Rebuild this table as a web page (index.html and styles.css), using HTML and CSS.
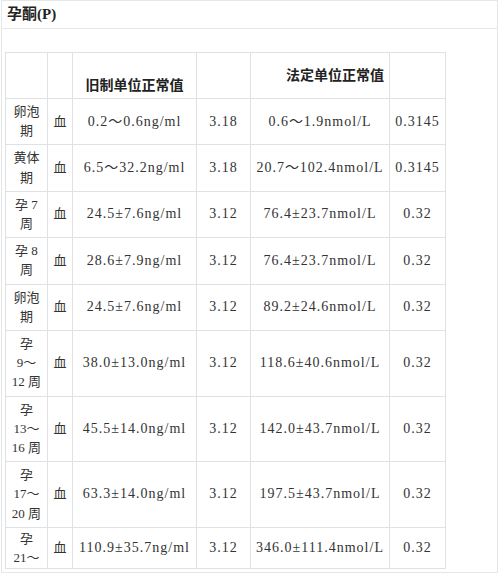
FILE: index.html
```html
<!DOCTYPE html>
<html lang="zh-CN">
<head>
<meta charset="utf-8">
<title>孕酮(P)</title>
<link rel="stylesheet" href="styles.css">
</head>
<body>
<div class="panel">
  <div class="panel-title">孕酮(P)</div>
  <div class="panel-body">
    <table class="grid">
      <colgroup>
        <col class="c1"><col class="c2"><col class="c3"><col class="c4"><col class="c5"><col class="c6">
      </colgroup>
      <tr class="head">
        <td></td>
        <td></td>
        <td class="h-old">旧制单位正常值</td>
        <td></td>
        <td class="h-new">法定单位正常值</td>
        <td></td>
      </tr>
      <tr>
        <td class="stage">卵泡<br>期</td><td class="src">血</td>
        <td class="num">0.2～0.6ng/ml</td><td class="num">3.18</td>
        <td class="num">0.6～1.9nmol/L</td><td class="num">0.3145</td>
      </tr>
      <tr>
        <td class="stage">黄体<br>期</td><td class="src">血</td>
        <td class="num">6.5～32.2ng/ml</td><td class="num">3.18</td>
        <td class="num">20.7～102.4nmol/L</td><td class="num">0.3145</td>
      </tr>
      <tr>
        <td class="stage">孕 7<br>周</td><td class="src">血</td>
        <td class="num">24.5±7.6ng/ml</td><td class="num">3.12</td>
        <td class="num">76.4±23.7nmol/L</td><td class="num">0.32</td>
      </tr>
      <tr>
        <td class="stage">孕 8<br>周</td><td class="src">血</td>
        <td class="num">28.6±7.9ng/ml</td><td class="num">3.12</td>
        <td class="num">76.4±23.7nmol/L</td><td class="num">0.32</td>
      </tr>
      <tr>
        <td class="stage">卵泡<br>期</td><td class="src">血</td>
        <td class="num">24.5±7.6ng/ml</td><td class="num">3.12</td>
        <td class="num">89.2±24.6nmol/L</td><td class="num">0.32</td>
      </tr>
      <tr>
        <td class="stage">孕<br>9～<br>12 周</td><td class="src">血</td>
        <td class="num">38.0±13.0ng/ml</td><td class="num">3.12</td>
        <td class="num">118.6±40.6nmol/L</td><td class="num">0.32</td>
      </tr>
      <tr>
        <td class="stage">孕<br>13～<br>16 周</td><td class="src">血</td>
        <td class="num">45.5±14.0ng/ml</td><td class="num">3.12</td>
        <td class="num">142.0±43.7nmol/L</td><td class="num">0.32</td>
      </tr>
      <tr>
        <td class="stage">孕<br>17～<br>20 周</td><td class="src">血</td>
        <td class="num">63.3±14.0ng/ml</td><td class="num">3.12</td>
        <td class="num">197.5±43.7nmol/L</td><td class="num">0.32</td>
      </tr>
      <tr class="last">
        <td class="stage">孕<br>21～</td><td class="src">血</td>
        <td class="num">110.9±35.7ng/ml</td><td class="num">3.12</td>
        <td class="num">346.0±111.4nmol/L</td><td class="num">0.32</td>
      </tr>
    </table>
  </div>
</div>
</body>
</html>
```
FILE: styles.css
```css
html, body {
  margin: 0;
  padding: 0;
  background: #ffffff;
}

.panel {
  width: 495px;
  height: 571px;
  margin-left: 1px;
  border: 1px solid #e4e6e8;
  box-sizing: content-box;
  overflow: hidden;
}

.panel-title {
  height: 27px;
  line-height: 27px;
  border-bottom: 1px solid #e4e6e8;
  padding-left: 5px;
  font-family: "Liberation Serif", "Noto Sans CJK SC", serif;
  font-weight: bold;
  font-size: 15px;
  color: #222222;
}

.panel-body {
  padding: 23px 0 0 3px;
}

.grid {
  border-collapse: collapse;
  table-layout: fixed;
  width: 440px;
  font-family: "Liberation Serif", "Noto Sans CJK SC", serif;
  font-size: 14px;
  color: #333333;
}

.c1 { width: 42px; }
.c2 { width: 25px; }
.c3 { width: 124px; }
.c4 { width: 54px; }
.c5 { width: 139px; }
.c6 { width: 56px; }

.grid td {
  border: 1px solid #dfe1e3;
  padding: 3px 2px 4px;
  line-height: 19.2px;
  text-align: center;
  vertical-align: middle;
  white-space: nowrap;
}

.grid .head td {
  height: 38px;
}

.grid .h-old,
.grid .h-new {
  font-family: "Noto Sans CJK SC", sans-serif;
  font-weight: bold;
  font-size: 14px;
  color: #222222;
}

.grid .h-old {
  vertical-align: bottom;
  padding-bottom: 4px;
}

.grid .h-new {
  text-align: right;
  padding-right: 5px;
}

.grid .stage,
.grid .src {
  font-size: 13px;
}

.grid .num {
  letter-spacing: 1px;
}

.grid .last td {
  padding-top: 1px;
  padding-bottom: 1px;
}
```
